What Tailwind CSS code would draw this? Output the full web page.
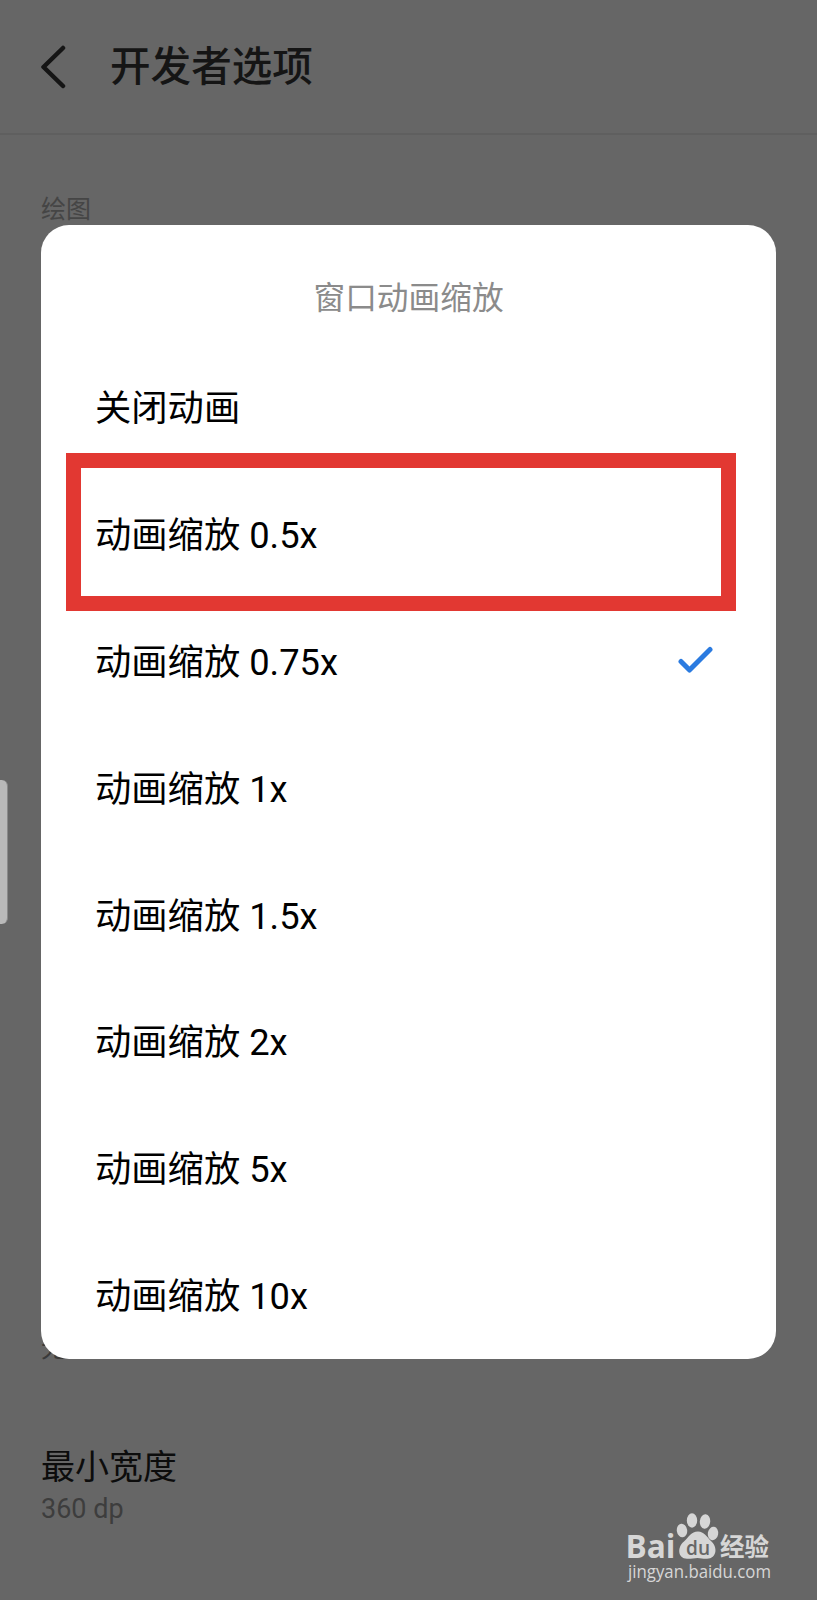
<!DOCTYPE html>
<html lang="zh-CN">
<head>
    <meta charset="UTF-8">
    <meta name="viewport" content="width=device-width, initial-scale=1.0">
    <title>开发者选项</title>
    <script src="https://cdn.jsdelivr.net/npm/@tailwindcss/browser@4"></script>
</head>
<body class="relative flex flex-col h-[1600px] overflow-hidden bg-[#666666] font-['Roboto','Noto_Sans_CJK_SC',sans-serif]">

    <!-- Header -->
    <header class="flex items-center h-[135px] border-b-2 border-[#5f5f5f] pl-[39px]">
        <svg class="w-7 h-11" viewBox="0 0 28 44" fill="none" stroke="#151515" stroke-width="4.500" stroke-linecap="round" stroke-linejoin="round">
            <path d="M24 3L4.500 22L24 41"/>
        </svg>
        <h1 class="ml-[43px] text-[40.6px] leading-[60px] font-medium text-[#151515]">开发者选项</h1>
    </header>

    <!-- Settings list -->
    <main class="flex flex-col px-[41px]">
        <h2 class="mt-[57px] text-[25px] leading-9 text-[#454545]">绘图</h2>
        <p class="mt-[1102px] text-[26px] leading-9 text-[#3a3a3a]">无</p>
        <div class="mt-[76px]">
            <h3 class="text-[34px] leading-[50px] text-[#0c0c0c]">最小宽度</h3>
            <p class="-mt-px text-[27px] leading-9 text-[#3d3d3d]">360 dp</p>
        </div>
    </main>

    <!-- Side panel handle -->
    <div class="absolute left-0 top-[780px] w-2 h-[144px] rounded-r-md bg-[#b9b9b9] border-r border-[#8a8a8a]"></div>

    <!-- Dialog -->
    <div class="absolute left-[41px] top-[224.500px] w-[735px] h-[1134px] rounded-[28px] bg-white px-[54px] pt-[47px] text-black">
        <h2 class="text-center text-[31.700px] leading-[54px] text-[#8b8b8b]">窗口动画缩放</h2>
        <ul class="mt-[20px] text-[36.300px] leading-[50px]">
            <li class="flex items-center h-[126.900px]">关闭动画</li>
            <li class="flex items-center h-[126.900px]">动画缩放 0.5x</li>
            <li class="flex items-center justify-between h-[126.900px]">
                动画缩放 0.75x
                <svg class="w-9 h-8 mr-[9px] mb-[5px]" viewBox="0 0 36 32" fill="none" stroke="#2b7be0" stroke-width="5" stroke-linecap="round" stroke-linejoin="round">
                    <path d="M4 17.500L12.500 26L33 5.500"/>
                </svg>
            </li>
            <li class="flex items-center h-[126.900px]">动画缩放 1x</li>
            <li class="flex items-center h-[126.900px]">动画缩放 1.5x</li>
            <li class="flex items-center h-[126.900px]">动画缩放 2x</li>
            <li class="flex items-center h-[126.900px]">动画缩放 5x</li>
            <li class="flex items-center h-[126.900px]">动画缩放 10x</li>
        </ul>
    </div>

    <!-- Highlight -->
    <div class="absolute left-[66px] top-[452.500px] w-[670px] h-[158.500px] border-[15px] border-[#e23832]"></div>

    <!-- Watermark -->
    <svg class="absolute left-[610px] top-[1490px] w-[190px] h-[110px]" viewBox="0 0 190 110" fill="#d6d6d6">
        <text x="15.500" y="67.500" font-family="Open Sans" font-size="32" font-weight="700" textLength="50" lengthAdjust="spacingAndGlyphs">Bai</text>
        <ellipse cx="72" cy="40.500" rx="5.200" ry="6.800" transform="rotate(-8 72 40.500)"/>
        <ellipse cx="82" cy="30.500" rx="5.200" ry="7.200"/>
        <ellipse cx="95" cy="31.500" rx="5.200" ry="7.200" transform="rotate(6 95 31.500)"/>
        <ellipse cx="103" cy="43.500" rx="5.200" ry="6.800" transform="rotate(10 103 43.500)"/>
        <path d="M88 41.500C94 41.500 97 47 101 51C108 57 107 68.500 97 68.800C93 69 91 68 87.500 68C84 68 81 69 77 68.800C67.500 68.500 67 57 74 51.500C79 47 81 41.500 88 41.500Z"/>
        <text x="76" y="64.500" fill="#666666" font-family="Open Sans" font-size="20" font-weight="600" textLength="24" lengthAdjust="spacingAndGlyphs">du</text>
        <text x="110" y="65.500" font-family="Noto Sans CJK SC" font-size="25" font-weight="700" textLength="49" lengthAdjust="spacingAndGlyphs">经验</text>
        <text x="18" y="87.500" font-family="Open Sans" font-size="17.500" font-weight="500" textLength="143" lengthAdjust="spacingAndGlyphs">jingyan.baidu.com</text>
    </svg>

</body>
</html>
